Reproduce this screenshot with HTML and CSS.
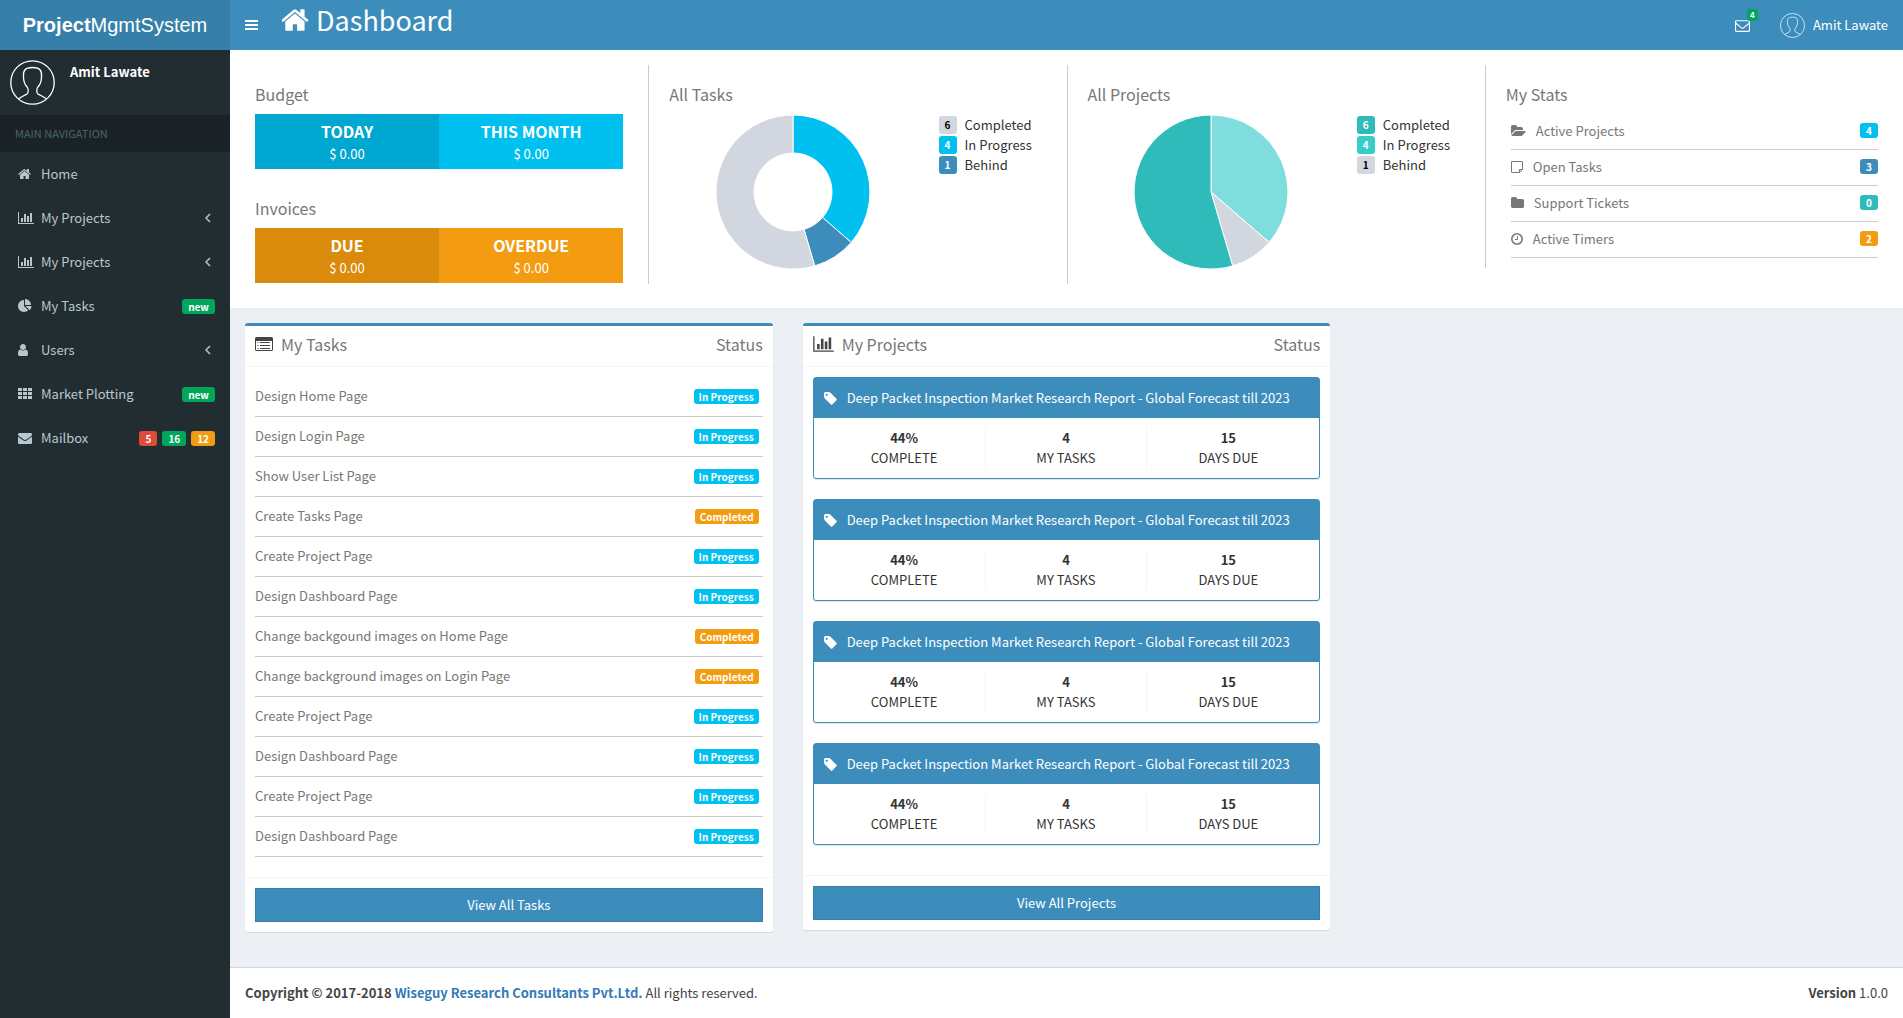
FILE: index.html
```html
<!DOCTYPE html>
<html lang="en">
<head>
<meta charset="utf-8">
<meta name="viewport" content="width=device-width, initial-scale=1">
<title>Dashboard - ProjectMgmtSystem</title>
<link rel="stylesheet" href="styles.css">
</head>
<body>
<svg class="sprite" aria-hidden="true">
  <symbol id="i-home" viewBox="0 0 1664 1792"><path transform="translate(-64)" d="M1408 992v480q0 26-19 45t-45 19h-384v-384h-256v384h-384q-26 0-45-19t-19-45v-480q0-1 .5-3t.5-3l575-474 575 474q1 2 1 6zm223-69l-62 74q-8 9-21 11h-3q-13 0-21-7l-692-577-692 577q-12 8-24 7-13-2-21-11l-62-74q-8-10-7-23.5t11-21.5l719-599q32-26 76-26t76 26l244 204v-195q0-14 9-23t23-9h192q14 0 23 9t9 23v408l219 182q10 8 11 21.5t-7 23.5z"/></symbol>
  <symbol id="i-chart" viewBox="0 0 2048 1792"><path d="M640 896v512h-256v-512h256zm384-512v1024h-256v-1024h256zm1024 1152v128h-2048v-1536h128v1408h1920zm-640-896v768h-256v-768h256zm384-384v1152h-256v-1152h256z"/></symbol>
  <symbol id="i-pie" viewBox="0 0 1792 1792"><path d="M768 890l546 546q-106 108-247.5 168t-298.5 60q-209 0-385.5-103t-279.5-279.5-103-385.5 103-385.5 279.5-279.5 385.5-103v762zm187 6h773q0 157-60 298.5t-168 247.5zm709-128h-768v-768q209 0 385.5 103t279.5 279.5 103 385.5z"/></symbol>
  <symbol id="i-user" viewBox="256 0 1280 1792"><path d="M1536 1399q0 109-62.5 187t-150.5 78h-854q-88 0-150.5-78t-62.5-187q0-85 8.5-160.5t31.5-152 58.5-131 94-89 134.5-34.5q131 128 313 128t313-128q76 0 134.5 34.5t94 89 58.5 131 31.5 152 8.5 160.5zm-256-887q0 159-112.5 271.5t-271.5 112.5-271.5-112.5-112.5-271.5 112.5-271.5 271.5-112.5 271.5 112.5 112.5 271.5z"/></symbol>
  <symbol id="i-th" viewBox="0 0 14 14"><path d="M0 1h4v3H0zM5 1h4v3H5zM10 1h4v3h-4zM0 5h4v3H0zM5 5h4v3H5zM10 5h4v3h-4zM0 9h4v3H0zM5 9h4v3H5zM10 9h4v3h-4z"/></symbol>
  <symbol id="i-mail" viewBox="0 0 1792 1792"><path d="M1792 710v794q0 66-47 113t-113 47h-1472q-66 0-113-47t-47-113v-794q44 49 101 87 362 246 497 345 57 42 92.5 65.5t94.5 48 110 24.5h2q51 0 110-24.5t94.5-48 92.5-65.5q170-123 498-345 57-39 100-87zm0-294q0 79-49 151t-122 123q-376 261-468 325-10 7-42.5 31t-54 38.5-52 32.5-57.5 27-50 9h-2q-23 0-50-9t-57.5-27-52-32.5-54-38.5-42.5-31q-91-64-262-182.5t-205-142.5q-62-42-117-115.5t-55-136.5q0-78 41.5-130t118.5-52h1472q65 0 112.5 47t47.5 113z"/></symbol>
  <symbol id="i-mail-o" viewBox="0 0 1792 1792"><path d="M1664 1504v-768q-32 36-69 66-268 206-426 338-51 43-83 67t-86.5 48.5-102.5 24.5h-2q-48 0-102.5-24.5t-86.5-48.5-83-67q-158-132-426-338-37-30-69-66v768q0 13 9.5 22.5t22.5 9.5h1472q13 0 22.5-9.5t9.5-22.5zm0-1051v-24.5l-.5-13-3-12.5-5.5-9-9-7.5-14-2.5h-1472q-13 0-22.5 9.5t-9.5 22.5q0 168 147 284 193 152 401 317 6 5 35 29.5t46 37.5 44.5 31.5 50.5 27.5 43 9h2q20 0 43-9t50.5-27.5 44.5-31.5 46-37.5 35-29.5q208-165 401-317 54-43 100.5-115.5t46.5-131.5zm128-37v1088q0 66-47 113t-113 47h-1472q-66 0-113-47t-47-113v-1088q0-66 47-113t113-47h1472q66 0 113 47t47 113z"/></symbol>
  <symbol id="i-folder-open" viewBox="0 0 1920 1792"><path d="M1879 952q0 31-31 66l-336 396q-43 51-120.5 86.5t-143.5 35.5h-1088q-34 0-60.5-13t-26.5-43q0-31 31-66l336-396q43-51 120.5-86.5t143.5-35.5h1088q34 0 60.5 13t26.5 43zm-343-344v160h-832q-94 0-197 47.5t-164 119.5l-337 396-5 6q0-4-.5-12.5t-.5-12.5v-960q0-92 66-158t158-66h320q92 0 158 66t66 158v32h544q92 0 158 66t66 158z"/></symbol>
  <symbol id="i-folder" viewBox="64 0 1664 1792"><path d="M1728 608v704q0 92-66 158t-158 66h-1216q-92 0-158-66t-66-158v-960q0-92 66-158t158-66h320q92 0 158 66t66 158v32h672q92 0 158 66t66 158z"/></symbol>
  <symbol id="i-note" viewBox="0 0 12 14"><path fill="none" stroke="currentColor" d="M1 1.500H11a.5.5 0 0 1 .5.500V9.500L8.500 12.500H1a.5.5 0 0 1-.5-.5V2a.5.5 0 0 1 .5-.5zM8.500 12.500V9.500H11.500"/></symbol>
  <symbol id="i-clock" viewBox="0 0 12 14"><circle cx="6" cy="7" r="5.200" fill="none" stroke="currentColor" stroke-width="1.600"/><path fill="none" stroke="currentColor" d="M6.500 4V7.500H4"/></symbol>
  <symbol id="i-list" viewBox="0 0 18 18"><path fill-rule="evenodd" d="M1.500 2h15A1.500 1.500 0 0 1 18 3.500v11a1.500 1.500 0 0 1-1.500 1.500h-15A1.500 1.500 0 0 1 0 14.500v-11A1.500 1.500 0 0 1 1.500 2zM1 6v8.500a.5.5 0 0 0 .5.5h15a.5.5 0 0 0 .5-.5V6z"/><path d="M2.500 7h1v1h-1zM5 7h10v1H5zM2.500 10h1v1h-1zM5 10h10v1H5zM2.500 13h1v1h-1zM5 13h10v1H5z"/></symbol>
  <symbol id="i-tag" viewBox="128 0 1536 1792"><path d="M576 448q0-53-37.500-90.500t-90.500-37.500-90.500 37.500-37.500 90.500 37.500 90.500 90.500 37.500 90.500-37.500 37.500-90.500zm1067 576q0 53-37 90l-491 492q-39 37-91 37-53 0-90-37l-715-716q-38-37-64.500-101t-26.500-117v-416q0-52 38-90t90-38h416q53 0 117 26.500t102 64.500l715 714q37 39 37 91z"/></symbol>
  <symbol id="i-left" viewBox="0 0 6 10"><path fill="none" stroke="currentColor" stroke-width="1.500" d="M5 1L1 5l4 4"/></symbol>
  <symbol id="i-bars" viewBox="0 0 13 10"><path d="M0 0h13v2H0zM0 4h13v2H0zM0 8h13v2H0z"/></symbol>
  <symbol id="i-avatar" viewBox="0 0 45 45"><g fill="none" stroke="currentColor" stroke-width="1.300"><circle cx="22.500" cy="22.500" r="21.700"/><path d="M8.500 39c2-2 6-3.500 8.500-5 1.500-1 1.500-5 .5-6.500-3-3-4-7-4-10.500-.5-6 1-9.500 9-9.500s9.500 3.500 9 9.500c0 3.500-1 7.500-4 10.500-1 1.500-1 5.500.5 6.500 2.500 1.500 6.500 3 8.500 5"/></g></symbol>
</svg>

<header class="topbar">
  <a class="logo" href="#"><b>Project</b>MgmtSystem</a>
  <nav class="navbar" aria-label="Top">
    <button class="toggle" type="button" aria-label="Toggle navigation"><svg><use href="#i-bars"/></svg></button>
    <h1 class="page-title"><svg><use href="#i-home"/></svg>Dashboard</h1>
    <a class="messages" href="#" aria-label="Messages"><svg><use href="#i-mail-o"/></svg><span class="count">4</span></a>
    <a class="account" href="#"><svg><use href="#i-avatar"/></svg>Amit Lawate</a>
  </nav>
</header>

<div class="shell">
  <aside class="sidebar">
    <div class="user-panel"><svg><use href="#i-avatar"/></svg><p>Amit Lawate</p></div>
    <h2 class="nav-header">MAIN NAVIGATION</h2>
    <nav aria-label="Main">
      <ul class="menu">
        <li><a href="#"><svg class="ic"><use href="#i-home"/></svg><span>Home</span></a></li>
        <li><a href="#"><svg class="ic wide"><use href="#i-chart"/></svg><span>My Projects</span><svg class="arrow"><use href="#i-left"/></svg></a></li>
        <li><a href="#"><svg class="ic wide"><use href="#i-chart"/></svg><span>My Projects</span><svg class="arrow"><use href="#i-left"/></svg></a></li>
        <li><a href="#"><svg class="ic"><use href="#i-pie"/></svg><span>My Tasks</span><small class="label green">new</small></a></li>
        <li><a href="#"><svg class="ic narrow"><use href="#i-user"/></svg><span>Users</span><svg class="arrow"><use href="#i-left"/></svg></a></li>
        <li><a href="#"><svg class="ic"><use href="#i-th"/></svg><span>Market Plotting</span><small class="label green">new</small></a></li>
        <li><a href="#"><svg class="ic"><use href="#i-mail"/></svg><span>Mailbox</span><small class="label red">5</small><small class="label green">16</small><small class="label yellow">12</small></a></li>
      </ul>
    </nav>
  </aside>

  <div class="main">
    <section class="summary">
      <div class="panel money">
        <h3 class="title">Budget</h3>
        <div class="pair">
          <div class="tile aqua-dark"><strong>TODAY</strong><span>$ 0.00</span></div>
          <div class="tile aqua"><strong>THIS MONTH</strong><span>$ 0.00</span></div>
        </div>
        <h3 class="title">Invoices</h3>
        <div class="pair">
          <div class="tile yellow-dark"><strong>DUE</strong><span>$ 0.00</span></div>
          <div class="tile yellow"><strong>OVERDUE</strong><span>$ 0.00</span></div>
        </div>
      </div>

      <div class="panel">
        <h3 class="title">All Tasks</h3>
        <div class="chart-row">
          <svg class="chart" viewBox="-78 -78 156 156" role="img" aria-label="All tasks by state">
            <g stroke="#fff">
              <path fill="#00c0ef" d="M0-77A77 77 0 0 1 58.200 50.400L29.500 25.500A39 39 0 0 0 0-39z"/>
              <path fill="#3c8dbc" d="M58.200 50.400A77 77 0 0 1 21.700 73.900L11 37.400A39 39 0 0 0 29.500 25.500z"/>
              <path fill="#d2d6de" d="M21.700 73.900A77 77 0 1 1 0-77V-39A39 39 0 1 0 11 37.400z"/>
            </g>
          </svg>
          <ul class="legend">
            <li><span class="key gray">6</span>Completed</li>
            <li><span class="key aqua">4</span>In Progress</li>
            <li><span class="key blue">1</span>Behind</li>
          </ul>
        </div>
      </div>

      <div class="panel">
        <h3 class="title">All Projects</h3>
        <div class="chart-row">
          <svg class="chart" viewBox="-78 -78 156 156" role="img" aria-label="All projects by state">
            <g stroke="#fff">
              <path fill="#7fdedd" d="M0-77A77 77 0 0 1 58.200 50.400L0 0z"/>
              <path fill="#d2d6de" d="M58.200 50.400A77 77 0 0 1 21.700 73.900L0 0z"/>
              <path fill="#30bbbb" d="M21.700 73.900A77 77 0 1 1 0-77V0z"/>
            </g>
          </svg>
          <ul class="legend">
            <li><span class="key teal">6</span>Completed</li>
            <li><span class="key teal-light">4</span>In Progress</li>
            <li><span class="key gray">1</span>Behind</li>
          </ul>
        </div>
      </div>

      <div class="panel short">
        <h3 class="title">My Stats</h3>
        <ul class="stats">
          <li><svg class="ic fo"><use href="#i-folder-open"/></svg>Active Projects<span class="label aqua">4</span></li>
          <li><svg class="ic"><use href="#i-note"/></svg>Open Tasks<span class="label blue">3</span></li>
          <li><svg class="ic f"><use href="#i-folder"/></svg>Support Tickets<span class="label teal">0</span></li>
          <li><svg class="ic"><use href="#i-clock"/></svg>Active Timers<span class="label yellow">2</span></li>
        </ul>
      </div>
    </section>

    <main class="content">
      <section class="box">
        <header class="box-head"><svg class="head-ic"><use href="#i-list"/></svg><h3>My Tasks</h3><h3>Status</h3></header>
        <div class="box-body">
          <table class="tasks" aria-label="My Tasks">
            <tbody>
              <tr><td>Design Home Page</td><td><span class="label aqua">In Progress</span></td></tr>
              <tr><td>Design Login Page</td><td><span class="label aqua">In Progress</span></td></tr>
              <tr><td>Show User List Page</td><td><span class="label aqua">In Progress</span></td></tr>
              <tr><td>Create Tasks Page</td><td><span class="label yellow">Completed</span></td></tr>
              <tr><td>Create Project Page</td><td><span class="label aqua">In Progress</span></td></tr>
              <tr><td>Design Dashboard Page</td><td><span class="label aqua">In Progress</span></td></tr>
              <tr><td>Change backgound images on Home Page</td><td><span class="label yellow">Completed</span></td></tr>
              <tr><td>Change background images on Login Page</td><td><span class="label yellow">Completed</span></td></tr>
              <tr><td>Create Project Page</td><td><span class="label aqua">In Progress</span></td></tr>
              <tr><td>Design Dashboard Page</td><td><span class="label aqua">In Progress</span></td></tr>
              <tr><td>Create Project Page</td><td><span class="label aqua">In Progress</span></td></tr>
              <tr><td>Design Dashboard Page</td><td><span class="label aqua">In Progress</span></td></tr>
            </tbody>
          </table>
        </div>
        <footer class="box-foot"><button class="btn" type="button">View All Tasks</button></footer>
      </section>

      <section class="box">
        <header class="box-head"><svg class="head-ic wide"><use href="#i-chart"/></svg><h3>My Projects</h3><h3>Status</h3></header>
        <div class="box-body projects">
          <article class="card">
            <h4><svg><use href="#i-tag"/></svg>Deep Packet Inspection Market Research Report - Global Forecast till 2023</h4>
            <dl><div><dt>COMPLETE</dt><dd>44%</dd></div><div><dt>MY TASKS</dt><dd>4</dd></div><div><dt>DAYS DUE</dt><dd>15</dd></div></dl>
          </article>
          <article class="card">
            <h4><svg><use href="#i-tag"/></svg>Deep Packet Inspection Market Research Report - Global Forecast till 2023</h4>
            <dl><div><dt>COMPLETE</dt><dd>44%</dd></div><div><dt>MY TASKS</dt><dd>4</dd></div><div><dt>DAYS DUE</dt><dd>15</dd></div></dl>
          </article>
          <article class="card">
            <h4><svg><use href="#i-tag"/></svg>Deep Packet Inspection Market Research Report - Global Forecast till 2023</h4>
            <dl><div><dt>COMPLETE</dt><dd>44%</dd></div><div><dt>MY TASKS</dt><dd>4</dd></div><div><dt>DAYS DUE</dt><dd>15</dd></div></dl>
          </article>
          <article class="card">
            <h4><svg><use href="#i-tag"/></svg>Deep Packet Inspection Market Research Report - Global Forecast till 2023</h4>
            <dl><div><dt>COMPLETE</dt><dd>44%</dd></div><div><dt>MY TASKS</dt><dd>4</dd></div><div><dt>DAYS DUE</dt><dd>15</dd></div></dl>
          </article>
        </div>
        <footer class="box-foot"><button class="btn" type="button">View All Projects</button></footer>
      </section>
    </main>

    <footer class="page-foot">
      <p><b>Copyright © 2017-2018 <a href="#">Wiseguy Research Consultants Pvt.Ltd.</a></b> All rights reserved.</p>
      <p><b>Version</b> 1.0.0</p>
    </footer>
  </div>
</div>
</body>
</html>
```
FILE: styles.css
```css
* { box-sizing: border-box; }
body {
  margin: 0;
  min-height: 100vh;
  display: flex;
  flex-direction: column;
  background: #ecf0f5;
  color: #333;
  font: 400 13px/20px "Noto Sans CJK SC", "Noto Sans", sans-serif;
}
h1, h2, h3, h4, p, ul, dl, dd { margin: 0; padding: 0; font-weight: 400; }
ul { list-style: none; }
a { color: inherit; text-decoration: none; }
svg { fill: currentColor; flex: none; }
button { font: inherit; cursor: pointer; }
.sprite { position: absolute; width: 0; height: 0; }

.aqua { background: #00c0ef; }
.aqua-dark { background: #00a7d0; }
.yellow { background: #f39c12; }
.yellow-dark { background: #db8b0b; }
.green { background: #00a65a; }
.red { background: #dd4b39; }
.blue { background: #3c8dbc; }
.teal { background: #30bbbb; }
.teal-light { background: #39cccc; }
.gray { background: #d2d6de; }

.label {
  display: inline-block;
  min-width: 18px;
  padding: 0 5px;
  border-radius: 3px;
  color: #fff;
  font-size: 10px;
  font-weight: 700;
  line-height: 15px;
  text-align: center;
}

/* top bar */
.topbar { display: flex; height: 50px; color: #fff; }
.logo {
  flex: none;
  width: 230px;
  background: #367fa9;
  font: 20px/50px "Liberation Sans", Arial, sans-serif;
  text-align: center;
}
.navbar { flex: 1; display: flex; align-items: center; padding: 0 15px; background: #3c8dbc; }
.toggle { padding: 0; border: 0; background: none; color: inherit; display: flex; }
.toggle svg { width: 13px; height: 10px; }
.page-title {
  display: flex;
  align-items: center;
  gap: 6px;
  margin: 0 auto 10px 24px;
  font-size: 27px;
  line-height: 36px;
}
.page-title svg { width: 28px; height: 30px; }
.messages { position: relative; display: flex; margin-right: 30px; }
.messages svg { width: 15px; height: 15px; }
.count {
  position: absolute;
  top: -9px;
  left: 12px;
  padding: 0 3px;
  border-radius: 3px;
  background: #00a65a;
  font-size: 8px;
  font-weight: 700;
  line-height: 12px;
}
.account { display: flex; align-items: center; gap: 8px; }
.account svg { width: 25px; height: 25px; }

/* sidebar */
.shell { flex: 1; display: flex; }
.sidebar { flex: none; width: 230px; background: #222d32; color: #b8c7ce; }
.user-panel { display: flex; gap: 15px; padding: 10px; color: #fff; }
.user-panel svg { width: 45px; height: 45px; }
.user-panel p { padding-top: 2px; font-weight: 700; }
.nav-header { padding: 8px 15px; background: #1a2226; color: #4b646f; font-size: 11px; line-height: 21px; }
.menu a { display: flex; align-items: center; gap: 5px; height: 44px; padding: 0 15px; }
.menu span { margin-right: auto; }
.menu .label { padding: 0 6px; }
.menu .ic { width: 14px; height: 14px; margin: 0 4px 0 3px; }
.menu .wide { width: 16px; margin-right: 2px; }
.menu .narrow { width: 10px; margin-right: 8px; }
.arrow { width: 6px; height: 10px; margin-right: 4px; }

/* summary band */
.main { flex: 1; min-width: 0; display: flex; flex-direction: column; }
.summary { display: grid; grid-template-columns: repeat(4, 1fr); align-items: start; padding: 15px 0 24px; background: #fff; }
.panel { padding: 19px 20px 0; border-left: 1px solid #ccc; min-height: 219px; }
.money { padding: 19px 25px 0; border: 0; }
.short { min-height: 203px; }
.title { color: #777; font-size: 16px; line-height: 20px; margin-bottom: 10px; }
.pair { display: grid; grid-template-columns: 1fr 1fr; margin-bottom: 29px; text-align: center; color: #fff; }
.pair:last-child { margin-bottom: 0; }
.tile { padding: 5px 0; }
.tile strong, .tile span { display: block; }
.tile strong { font-size: 16px; line-height: 25px; }
.chart-row { display: grid; grid-template-columns: 1fr 108px; gap: 22px; align-items: start; }
.chart { width: 156px; height: 156px; justify-self: center; }
.legend { padding-top: 1px; }
.legend li { display: flex; align-items: center; gap: 8px; height: 20px; }
.key {
  width: 18px;
  height: 18px;
  border-radius: 3px;
  color: #fff;
  font-size: 10px;
  font-weight: 700;
  line-height: 18px;
  text-align: center;
}
.key.gray { color: #000; }
.stats { padding: 0 5px; color: #777; }
.stats li { display: flex; align-items: center; gap: 10px; height: 36px; padding-bottom: 2px; border-bottom: 1px solid #ccc; }
.stats .ic { width: 12px; height: 14px; }
.stats .fo { width: 15px; }
.stats .f { width: 13px; }
.stats .label { margin-left: auto; }

/* boxes */
.content { flex: 1; display: grid; grid-template-columns: repeat(3, 1fr); gap: 30px; align-items: start; padding: 15px 15px 35px; }
.box { border-top: 3px solid #3c8dbc; border-radius: 3px; background: #fff; box-shadow: 0 1px 1px rgba(0, 0, 0, .1); }
.box-head { display: flex; align-items: center; padding: 8px 10px 12px; border-bottom: 1px solid #f4f4f4; color: #777; }
.box-head h3 { font-size: 16px; line-height: 20px; }
.box-head h3:last-child { margin-left: auto; }
.head-ic { width: 18px; height: 18px; margin-right: 8px; color: #444; }
.head-ic.wide { width: 21px; }
.box-body { padding: 10px 10px 20px; }
.tasks { width: 100%; border-spacing: 0; color: #777; }
.tasks td { height: 40px; padding: 0 0 2px; border-bottom: 1px solid #ccc; }
.tasks td:last-child { padding-right: 4px; text-align: right; }
.box-foot { padding: 10px; border-top: 1px solid #f4f4f4; }
.btn { display: block; width: 100%; height: 34px; padding: 0; border: 1px solid #367fa9; background: #3c8dbc; color: #fff; }
.projects { display: grid; gap: 20px; padding-bottom: 30px; }
.card { border: 1px solid #3c8dbc; border-radius: 3px; box-shadow: 0 1px 1px rgba(0, 0, 0, .1); }
.card h4 { display: flex; align-items: center; gap: 10px; height: 40px; padding: 0 10px; background: #3c8dbc; color: #fff; }
.card h4 svg { width: 13px; height: 15px; }
.card dl { display: grid; grid-template-columns: repeat(3, 1fr); padding: 10px; text-align: center; }
.card dl div { display: flex; flex-direction: column-reverse; border-right: 1px solid #f4f4f4; }
.card dl div:last-child { border-right: 0; }
.card dd { font-weight: 700; }

.page-foot { display: flex; justify-content: space-between; padding: 15px; border-top: 1px solid #d2d6de; background: #fff; color: #444; }
.page-foot a { color: #337ab7; }
```
